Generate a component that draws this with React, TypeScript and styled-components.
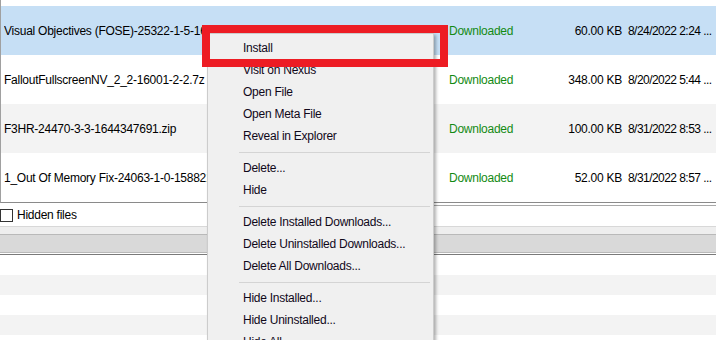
import styled, { createGlobalStyle } from "styled-components";

const GlobalStyle = createGlobalStyle`
	body {
		margin: 0;
		background: #ffffff;
		font-family: "Liberation Sans", Arial, sans-serif;
		font-size: 12px;
		letter-spacing: -0.25px;
		color: #000000;
	}
`;

const Screen = styled.div`
	position: relative;
	width: 716px;
	height: 340px;
	overflow: hidden;
	background: #ffffff;
`;

const FileList = styled.div`
	padding-top: 6px;
	border-left: 1px solid #a0a0a0;
	border-bottom: 1px solid #8a8a8a;
`;

const FileRow = styled.div<{ $bg: string }>`
	display: grid;
	grid-template-columns: 445px 100px 73px 1fr;
	align-items: center;
	height: 49px;
	padding-left: 3px;
	background: ${(p) => p.$bg};
	white-space: nowrap;
`;

const Cell = styled.span`
	overflow: hidden;
`;

const Status = styled.span`
	color: #138a13;
`;

const Size = styled.span`
	text-align: right;
`;

const DateCell = styled.span`
	padding-left: 6px;
	letter-spacing: -0.55px;
	overflow: hidden;
`;

const HiddenRow = styled.div`
	display: grid;
	grid-template-columns: 300px 1fr;
	height: 23px;
	border-bottom: 1px solid #d8d8d8;
`;

const CheckLabel = styled.label`
	display: flex;
	align-items: center;
	gap: 4px;
	padding-top: 1px;
`;

const CheckBox = styled.span`
	width: 11px;
	height: 11px;
	border: 1px solid #333333;
	background: #ffffff;
`;

const RightRule = styled.div`
	margin-top: 2px;
	border-top: 1px solid #a8a8a8;
`;

const Toolbar = styled.div`
	height: 7px;
	background: #eeeeee;
`;

const Header = styled.div`
	height: 17px;
	background: #d9d9d9;
	border-top: 1px solid #b9b9b9;
	border-bottom: 1px solid #b9b9b9;
`;

const HeaderRule = styled.div`
	margin-top: 1px;
	height: 1px;
	background: #7a7a7a;
`;

const EmptyRow = styled.div<{ $alt: boolean }>`
	height: 20px;
	background: ${(p) => (p.$alt ? "#f3f3f3" : "#ffffff")};
`;

const Menu = styled.div`
	position: absolute;
	left: 207px;
	top: 33px;
	width: 225px;
	padding: 3px 0 2px;
	background: #f0f0f0;
	border: 1px solid #cccccc;
	box-shadow: 2px 2px 3px rgba(0, 0, 0, 0.3);
`;

const MenuItem = styled.div`
	height: 22px;
	line-height: 22px;
	padding-left: 35px;
	color: #10081a;
	white-space: nowrap;
`;

const MenuSeparator = styled.div`
	height: 10px;
	display: flex;
	align-items: center;
	margin: 0 3px 0 31px;
	&::after {
		content: "";
		flex: 1;
		height: 1px;
		background: #d4d4d4;
	}
`;

const Highlight = styled.div`
	position: absolute;
	left: 202px;
	top: 25px;
	width: 246px;
	height: 42px;
	box-sizing: border-box;
	border: 8px solid #ed1c24;
`;

const files = [
	{ name: "Visual Objectives (FOSE)-25322-1-5-1661374260.7z", size: "60.00 KB", date: "8/24/2022 2:24 ...", bg: "#c6dff5" },
	{ name: "FalloutFullscreenNV_2_2-16001-2-2.7z", size: "348.00 KB", date: "8/20/2022 5:44 ...", bg: "#ffffff" },
	{ name: "F3HR-24470-3-3-1644347691.zip", size: "100.00 KB", date: "8/31/2022 8:53 ...", bg: "#f3f3f3" },
	{ name: "1_Out Of Memory Fix-24063-1-0-1588212345.7z", size: "52.00 KB", date: "8/31/2022 8:57 ...", bg: "#ffffff" },
];

const menu: (string | null)[] = [
	"Install",
	"Visit on Nexus",
	"Open File",
	"Open Meta File",
	"Reveal in Explorer",
	null,
	"Delete...",
	"Hide",
	null,
	"Delete Installed Downloads...",
	"Delete Uninstalled Downloads...",
	"Delete All Downloads...",
	null,
	"Hide Installed...",
	"Hide Uninstalled...",
	"Hide All",
];

function App() {
	return (
		<Screen>
			<GlobalStyle />
			<FileList>
				{files.map((f) => (
					<FileRow key={f.name} $bg={f.bg}>
						<Cell>{f.name}</Cell>
						<Status>Downloaded</Status>
						<Size>{f.size}</Size>
						<DateCell>{f.date}</DateCell>
					</FileRow>
				))}
			</FileList>
			<HiddenRow>
				<CheckLabel>
					<CheckBox />
					Hidden files
				</CheckLabel>
				<RightRule />
			</HiddenRow>
			<Toolbar />
			<Header />
			<HeaderRule />
			{[0, 1, 2, 3, 4].map((i) => (
				<EmptyRow key={i} $alt={i % 2 === 1} />
			))}
			<Menu>
				{menu.map((m, i) =>
					m === null ? (
						<MenuSeparator key={i} />
					) : (
						<MenuItem key={i}>{m}</MenuItem>
					)
				)}
			</Menu>
			<Highlight />
		</Screen>
	);
}

export default App;
